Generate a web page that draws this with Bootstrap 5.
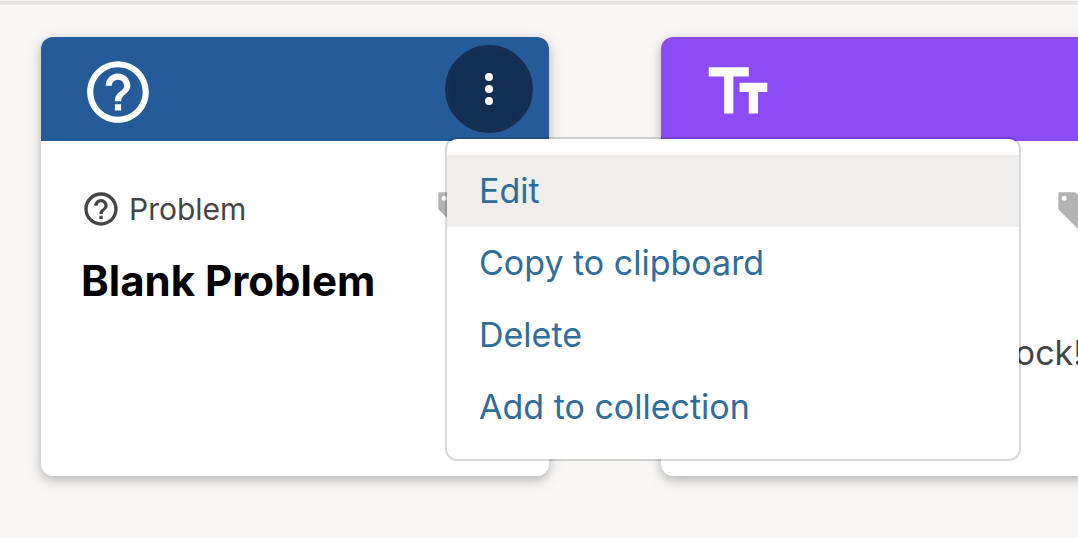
<!DOCTYPE html>
<html lang="en">
<head>
<meta charset="utf-8">
<meta name="viewport" content="width=device-width, initial-scale=1">
<title>Library components</title>
<link href="https://cdn.jsdelivr.net/npm/bootstrap@5.3.0/dist/css/bootstrap.min.css" rel="stylesheet">
<style>
  body { background: #f8f7f6; color: #454545; font-family: Inter, "Liberation Sans", sans-serif; overflow: hidden; }
  .top-rule { height: 5px; border-bottom: 4px solid #e7e5e3; }
  .component-grid { display: grid; grid-template-columns: repeat(2, calc(50vw - 31px)); gap: 72px 112px; padding: 32px 41px; }
  .component { border: 0; border-radius: 12px; min-height: 439px; box-shadow: 0 4px 8px rgba(0,0,0,.15), 0 4px 16px rgba(0,0,0,.15); }
  .component-head { min-height: 104px; padding: 8px 16px 8px 40px; border-radius: 12px 12px 0 0; color: #fff; }
  .head-problem { background: #265b99; }
  .head-text { background: #8d4bf6; }
  .head-icon { width: 74px; height: 74px; margin-top: 10px; }
  .component-body { padding: 44px 40px; }
  .type-line { font-size: 30px; line-height: 48px; min-height: 48px; }
  .type-icon { width: 40px; height: 40px; }
  .tag-icon { width: 40px; height: 40px; margin-right: 34px; color: #b3b3b3; }
  .component-title { color: #000; font-size: 42px; line-height: 56px; font-weight: 700; margin: 20px 0 0; }
  .component-text { font-size: 34px; line-height: 48px; margin: 96px 46px 0 0; }
  .btn-more { width: 88px; height: 88px; background: #122f52; border: 4px solid #182f54; }
  .btn-more svg { width: 48px; height: 48px; }
  .component-menu { width: 576px; top: 100%; right: auto; left: 0; margin-top: 4px; padding: 16px 0; border: 2px solid rgba(0,0,0,.15); border-radius: 12px; }
  .component-menu .dropdown-item { padding: 12px 32px; font-size: 34px; line-height: 48px; color: #306d99; }
  .component-menu .dropdown-item.current, .component-menu .dropdown-item:hover { background: #efeeec; }
</style>
</head>
<body>
<header class="top-rule"></header>
<main class="component-grid">
  <article class="card component">
    <div class="component-head head-problem d-flex justify-content-between align-items-start">
      <svg class="head-icon" viewBox="0 0 24 24" fill="currentColor" aria-hidden="true"><path d="M11 18h2v-2h-2v2zm1-16C6.480 2 2 6.480 2 12s4.480 10 10 10 10-4.480 10-10S17.520 2 12 2zm0 18c-4.410 0-8-3.590-8-8s3.590-8 8-8 8 3.590 8 8-3.590 8-8 8zm0-14c-2.210 0-4 1.790-4 4h2c0-1.100.9-2 2-2s2 .9 2 2c0 2-3 1.750-3 5h2c0-2.250 3-2.500 3-5 0-2.210-1.790-4-4-4z"/></svg>
      <div class="dropdown">
        <button class="btn btn-more rounded-circle p-0 d-flex align-items-center justify-content-center text-white" type="button" aria-label="Component actions" aria-expanded="true">
          <svg viewBox="0 0 24 24" fill="currentColor" aria-hidden="true"><circle cx="12" cy="6" r="2"/><circle cx="12" cy="12" r="2"/><circle cx="12" cy="18" r="2"/></svg>
        </button>
        <div class="dropdown-menu component-menu show">
          <a class="dropdown-item current" href="#">Edit</a>
          <a class="dropdown-item" href="#">Copy to clipboard</a>
          <a class="dropdown-item" href="#">Delete</a>
          <a class="dropdown-item" href="#">Add to collection</a>
        </div>
      </div>
    </div>
    <div class="component-body">
      <div class="type-line d-flex justify-content-between align-items-center">
        <span class="d-flex align-items-center gap-2">
          <svg class="type-icon" viewBox="0 0 24 24" fill="currentColor" aria-hidden="true"><path d="M11 18h2v-2h-2v2zm1-16C6.480 2 2 6.480 2 12s4.480 10 10 10 10-4.480 10-10S17.520 2 12 2zm0 18c-4.410 0-8-3.590-8-8s3.590-8 8-8 8 3.590 8 8-3.590 8-8 8zm0-14c-2.210 0-4 1.790-4 4h2c0-1.100.9-2 2-2s2 .9 2 2c0 2-3 1.750-3 5h2c0-2.250 3-2.500 3-5 0-2.210-1.790-4-4-4z"/></svg>
          Problem
        </span>
        <svg class="tag-icon" viewBox="0 0 24 24" fill="currentColor" fill-rule="evenodd" aria-hidden="true"><path d="M2 2h10.200L24 13.800 13.800 24 2 12.200zM7 5.500a1.500 1.500 0 1 0-3 0 1.500 1.500 0 0 0 3 0z"/></svg>
      </div>
      <h2 class="component-title">Blank Problem</h2>
    </div>
  </article>
  <article class="card component">
    <div class="component-head head-text d-flex align-items-start">
      <svg class="head-icon" viewBox="0 0 24 24" fill="currentColor" aria-hidden="true"><path d="M2.500 4v3h5v12h3V7h5V4h-13zm19 5h-9v3h3v7h3v-7h3V9z"/></svg>
    </div>
    <div class="component-body">
      <div class="type-line d-flex justify-content-end align-items-center">
        <svg class="tag-icon" viewBox="0 0 24 24" fill="currentColor" fill-rule="evenodd" aria-hidden="true"><path d="M2 2h10.200L24 13.800 13.800 24 2 12.200zM7 5.500a1.500 1.500 0 1 0-3 0 1.500 1.500 0 0 0 3 0z"/></svg>
      </div>
      <p class="component-text text-end">block!</p>
    </div>
  </article>
  <article class="card component"></article>
  <article class="card component"></article>
</main>
<script src="https://cdn.jsdelivr.net/npm/bootstrap@5.3.0/dist/js/bootstrap.bundle.min.js"></script>
</body>
</html>
